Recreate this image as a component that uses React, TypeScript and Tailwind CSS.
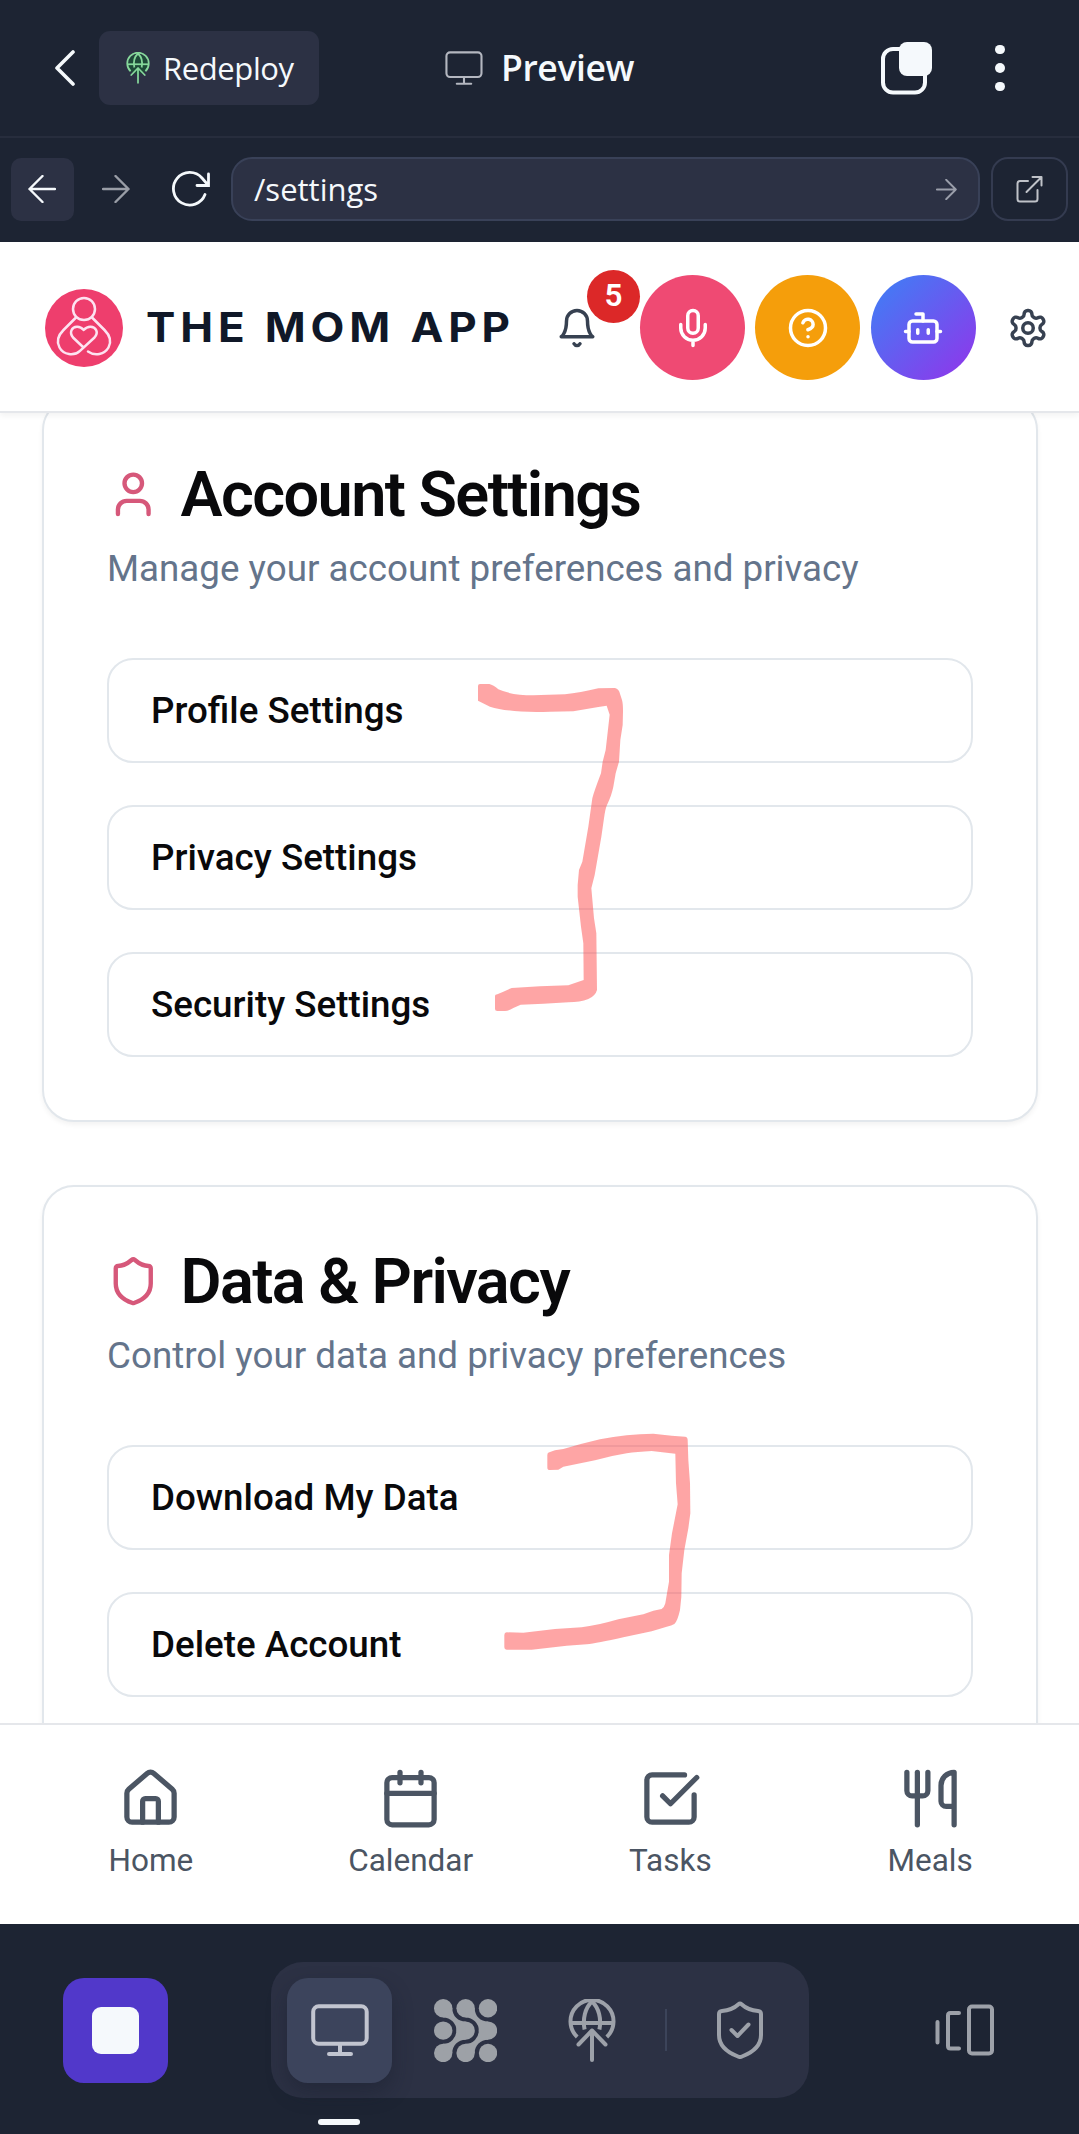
import React from "react";
import { Calendar, House, SquareCheckBig, User, Utensils } from "lucide-react";

const chromeFont = "font-['Open_Sans',sans-serif]";

function GlobeUp({ className, strokeWidth = 4, tint = "none" }: { className: string; strokeWidth?: number; tint?: string }) {
  return (
    <svg viewBox="0 0 48 63" className={className} fill="none" stroke="currentColor" strokeWidth={strokeWidth} strokeLinecap="round" strokeLinejoin="round">
      <circle cx="24" cy="24" r="20" fill={tint} stroke="none" />
      <g strokeLinecap="butt">
        <path d="M9.2 38A21.5 21.5 0 1 1 38.800 38" />
        <path d="M2.500 24h43" />
        <path d="M16.600 30.500C14.500 20 17 9 24 2.500C31 9 33.500 20 31.400 30.500" />
      </g>
      <path d="M10.500 45.500L24 31.500L37.500 45.500M24 31.500V61" />
    </svg>
  );
}

function Screen({ className, strokeWidth = 4 }: { className: string; strokeWidth?: number }) {
  return (
    <svg viewBox="0 0 58 52" className={className} fill="none" stroke="currentColor" strokeWidth={strokeWidth} strokeLinecap="round">
      <rect x="2.200" y="2.200" width="53.500" height="37.500" rx="5.500" />
      <path d="M29 40v9.500M18 50h22" />
    </svg>
  );
}

function Arrow({ className, flip = false }: { className: string; flip?: boolean }) {
  return (
    <svg viewBox="0 0 28 28" className={className} fill="none" stroke="currentColor" strokeWidth="2.400" strokeLinecap="round" strokeLinejoin="round">
      <path d={flip ? "M27 14H1.500M14.500 1L1.500 14L14.500 27" : "M1 14H26.500M13.500 1L26.500 14L13.500 27"} />
    </svg>
  );
}

function MomLogo() {
  return (
    <svg viewBox="0 0 78 78" className="size-[78px] shrink-0" fill="none" stroke="#fde3f1" strokeWidth="2.500" strokeLinecap="round" strokeLinejoin="round">
      <circle cx="39" cy="39" r="39" fill="#ee3e6d" stroke="none" />
      <circle cx="39" cy="20" r="11" />
      <path d="M31 28.500L18.500 41C12.500 47 11.500 53 14.500 58.500C18.500 66 29 67.500 35 61.800L49.500 48.500C54 43.500 51 38 45.500 37.800C42.500 37.700 41 38.500 38.700 41C36.500 38.500 34.500 37.700 32 37.800C26.500 38 24 43.500 28 48.500L38 58" />
      <path d="M47 28.500L59.500 41C65.500 47 66.500 53 63.500 58.500C59.500 65.500 50 67.500 43 62.500" />
    </svg>
  );
}

function Line({ children, className = "size-[42px]" }: { children: React.ReactNode; className?: string }) {
  return (
    <svg viewBox="0 0 24 24" className={className} fill="none" stroke="currentColor" strokeWidth="2" strokeLinecap="round" strokeLinejoin="round">
      {children}
    </svg>
  );
}

function Shield() {
  return (
    <Line className="size-[52.500px]">
      <path d="M20 13c0 5-3.500 7.500-7.660 8.950a1 1 0 0 1-.67-.01C7.500 20.500 4 18 4 13V6a1 1 0 0 1 1-1c2 0 4.500-1.200 6.240-2.720a1.170 1.170 0 0 1 1.520 0C14.510 3.810 17 5 19 5a1 1 0 0 1 1 1z" />
    </Line>
  );
}

function NodeGrid() {
  const c = [9.2, 31.6, 54];
  const link = (x: number) => (
    <g key={x}>
      <path d={`M${x + 9.1} 9.200C${x + 9.1} 17 ${x + 15} 22.500 ${x + 22.4} 22.500V31.600H${x + 13.2}A13.200 13.200 0 0 0 ${x} 18.400L${x} 9.200Z`} />
      <path d={`M${x + 9.1} 54C${x + 9.1} 46.200 ${x + 15} 40.700 ${x + 22.4} 40.700V31.600H${x + 13.2}A13.200 13.200 0 0 1 ${x} 44.800L${x} 54Z`} />
    </g>
  );
  return (
    <svg viewBox="0 0 63 63" className="size-[63px]" fill="#9da1a7">
      {c.map((x) => c.map((y) => <circle key={`${x}-${y}`} cx={x} cy={y} r="9.200" />))}
      {[9.2, 31.6].map(link)}
    </svg>
  );
}

function TopBar() {
  return (
    <div className={`flex h-[138px] shrink-0 items-center border-b-2 border-[#272d3d] text-[#f5f9fc] ${chromeFont}`}>
      <svg viewBox="0 0 20 36" className="ml-[55px] h-[36px] w-[20px]" fill="none" stroke="currentColor" strokeWidth="3.600" strokeLinecap="round" strokeLinejoin="round">
        <path d="M18 2L2 18L18 34" />
      </svg>
      <div className="ml-[24px] flex h-[74px] w-[220px] items-center rounded-[11px] bg-[#2c3144] pl-[27px]">
        <GlobeUp className="h-[32px] w-[24px] text-[#86d89b]" tint="#1d4a38" strokeWidth={3.5} />
        <span className="ml-[13px] text-[31px] tracking-[-0.400px]">Redeploy</span>
      </div>
      <Screen className="ml-[126px] h-[36px] w-[38px] text-[#b4b7c0]" strokeWidth={3.2} />
      <span className="ml-[18px] w-[136px] text-[35.500px] font-semibold tracking-[-0.400px]">Preview</span>
      <svg viewBox="0 0 52 54" className="ml-[244px] h-[54px] w-[52px]">
        <rect x="2" y="8" width="42" height="43.500" rx="10" fill="none" stroke="#f5f9fc" strokeWidth="4" />
        <rect x="18" y="1" width="33" height="34" rx="8" fill="#f5f9fc" />
      </svg>
      <div className="ml-[62px] flex flex-col gap-[9px]">
        <i className="size-[9.500px] rounded-full bg-[#f5f9fc]" />
        <i className="size-[9.500px] rounded-full bg-[#f5f9fc]" />
        <i className="size-[9.500px] rounded-full bg-[#f5f9fc]" />
      </div>
    </div>
  );
}

function AddressBar() {
  return (
    <div className={`flex h-[104px] shrink-0 items-center pb-[2px] pl-[11px] text-[#f5f9fc] ${chromeFont}`}>
      <div className="flex size-[63px] items-center justify-center rounded-[10px] bg-[#2c3144] pr-[2px]">
        <Arrow className="size-[28px]" flip />
      </div>
      <Arrow className="ml-[28px] size-[28px] text-[#999da6]" />
      <svg viewBox="0 0 38 36" className="ml-[42px] h-[36px] w-[38px]" fill="none" stroke="currentColor" strokeWidth="2.800" strokeLinecap="round">
        <path d="M33 23.500A16.300 16.300 0 1 1 30 7L36 14M36.500 3V14.500H25" />
      </svg>
      <div className="ml-[21px] flex h-[64px] w-[749px] items-center rounded-[21px] border-2 border-[#394158] bg-[#2c3144] pl-[21px]">
        <span className="text-[31px]">/settings</span>
        <Arrow className="mr-[21px] ml-auto size-[21px] text-[#9a9eaa]" />
      </div>
      <div className="ml-[11px] flex h-[64px] w-[77px] items-center justify-center rounded-[17px] border-2 border-[#343b50]">
        <svg viewBox="0 0 27 28" className="h-[28px] w-[27px]" fill="none" stroke="#bfc2c8" strokeWidth="2" strokeLinecap="round" strokeLinejoin="round">
          <path d="M12 6H4Q1.500 6 1.500 8.500V24Q1.500 26.500 4 26.500H19Q21.500 26.500 21.500 24V15M10.500 17L25.500 2M16.500 2H25.500V10.500" />
        </svg>
      </div>
    </div>
  );
}

function AppHeader() {
  const round = "flex size-[105px] shrink-0 items-center justify-center rounded-full text-white";
  return (
    <header className="relative z-10 flex h-[171px] shrink-0 items-center border-b-2 border-[#e5e7eb] bg-white pt-[2px] pl-[45px] shadow-[0_3px_6px_rgba(0,0,0,0.05)]">
      <MomLogo />
      <span className="mt-[2px] ml-[23px] w-[410px] shrink-0 origin-left scale-x-[1.085] font-[Inter,sans-serif] text-[40.500px] font-bold tracking-[4.500px] whitespace-nowrap text-[#101828]">
        THE MOM APP
      </span>
      <div className="relative text-[#374151]">
        <Line>
          <path d="M6 8a6 6 0 0 1 12 0c0 7 3 9 3 9H3s3-2 3-9" />
          <path d="M10.300 21a1.940 1.940 0 0 0 3.400 0" />
        </Line>
        <span className="absolute -top-[37px] left-[31px] flex size-[53px] items-center justify-center rounded-full bg-[#dc2828] text-[31.500px] font-semibold text-white">5</span>
      </div>
      <div className="ml-[42px] flex gap-[10px]">
        <div className={`${round} bg-[#ef4a73]`}>
          <Line>
            <path d="M12 2a3 3 0 0 0-3 3v7a3 3 0 0 0 6 0V5a3 3 0 0 0-3-3Z" />
            <path d="M19 10v2a7 7 0 0 1-14 0v-2M12 19v3" />
          </Line>
        </div>
        <div className={`${round} bg-[#f59e0b]`}>
          <Line>
            <circle cx="12" cy="12" r="10" />
            <path d="M9.090 9a3 3 0 0 1 5.830 1c0 2-3 3-3 3M12 17h.01" />
          </Line>
        </div>
        <div className={`${round} ml-[0.500px] bg-[linear-gradient(135deg,#3b82f6,#9333ea)]`}>
          <Line>
            <path d="M12 8V4H8" />
            <rect x="4" y="8" width="16" height="12" rx="2" />
            <path d="M2 14h2M20 14h2M15 13v2M9 13v2" />
          </Line>
        </div>
      </div>
      <div className="ml-[31px] text-[#374151]">
        <Line>
          <path d="M12.220 2h-.44a2 2 0 0 0-2 2v.18a2 2 0 0 1-1 1.730l-.43.25a2 2 0 0 1-2 0l-.15-.08a2 2 0 0 0-2.730.73l-.22.38a2 2 0 0 0 .73 2.730l.15.1a2 2 0 0 1 1 1.720v.51a2 2 0 0 1-1 1.740l-.15.09a2 2 0 0 0-.73 2.730l.22.38a2 2 0 0 0 2.730.73l.15-.08a2 2 0 0 1 2 0l.43.25a2 2 0 0 1 1 1.730V20a2 2 0 0 0 2 2h.44a2 2 0 0 0 2-2v-.18a2 2 0 0 1 1-1.730l.43-.25a2 2 0 0 1 2 0l.15.08a2 2 0 0 0 2.730-.73l.22-.39a2 2 0 0 0-.73-2.730l-.15-.08a2 2 0 0 1-1-1.740v-.5a2 2 0 0 1 1-1.740l.15-.09a2 2 0 0 0 .73-2.730l-.22-.38a2 2 0 0 0-2.730-.73l-.15.08a2 2 0 0 1-2 0l-.43-.25a2 2 0 0 1-1-1.730V4a2 2 0 0 0-2-2z" />
          <circle cx="12" cy="12" r="3" />
        </Line>
      </div>
    </header>
  );
}

function Card({ icon, title, subtitle, items }: { icon: React.ReactNode; title: string; subtitle: string; items: string[] }) {
  return (
    <section className="h-[724px] shrink-0 rounded-[32px] border-2 border-[#e2e7ec] bg-white px-[63px] pt-[63px] shadow-[0_3px_5px_rgba(0,0,0,0.05)]">
      <h2 className="flex h-[63px] items-center gap-[21px] text-[63px] leading-none font-semibold tracking-[-1.575px] whitespace-nowrap text-[#09090b]">
        <span className="text-[#d6587a]">{icon}</span>
        {title}
      </h2>
      <p className="mt-[16.500px] text-[36.750px] leading-[52.500px] whitespace-nowrap text-[#64748b]">{subtitle}</p>
      <div className="mt-[63px] flex flex-col gap-[42px]">
        {items.map((t) => (
          <div key={t} className="flex h-[105px] items-center rounded-[26px] border-2 border-[#e2e7ec] px-[42px] text-[36.750px] font-medium text-[#09090b]">
            {t}
          </div>
        ))}
      </div>
    </section>
  );
}

function Markup() {
  return (
    <>
      <svg viewBox="0 0 780 1200" className="pointer-events-none absolute top-[227px] left-[440px] h-[400px] w-[260px]" fill="#fe4b4b" fillOpacity="0.500">
        <path d="M114 138Q114 132 120 132L148 132Q160 135 175 148Q215 166 280 166L375 163Q420 158 475 145L523 144Q532 144 538 155L546 180Q549 190 549 215L548 255L541 300L537 365L527 400L520 440Q515 465 501 495Q496 505 492 535L484 590L464 705L454 745L462 835L469 880L471 1050Q466 1068 445 1077Q420 1087 385 1087L310 1091L242 1094L220 1104Q205 1113 195 1113L172 1113Q165 1113 165 1107L165 1068Q165 1063 172 1063L190 1055L215 1044L300 1039L385 1036L431 1020L430 910L423 860L413 770L413 735L417 690L427 665L445 560L457 475Q462 455 483 400L488 365L497 330L509 224L500 197L475 201L400 214L330 215Q210 219 150 200L114 182Z" />
      </svg>
      <svg viewBox="0 0 780 840" className="pointer-events-none absolute top-[987px] left-[480px] h-[280px] w-[260px]" fill="#fe4b4b" fillOpacity="0.500">
        <path d="M202 165Q202 158 208 157L225 151L250 147Q300 132 360 118Q440 102 520 101L575 107L615 110Q623 111 623 120L625 180L630 250L631 340L625 385L613 450L605 520L604 590L600 630Q592 665 583 672Q575 677 560 680L515 694L430 712Q350 730 320 733L260 737L155 749L80 749Q73 749 73 742L73 705Q73 698 80 697L130 698L225 687L305 682Q350 677 415 658L490 643L520 632L545 627Q553 622 556 610L561 580L567 545L567 465L576 400L593 313L588 250L586 161L515 153Q470 155 440 160Q390 168 345 181L250 200L235 209L210 210Q202 210 202 203Z" />
      </svg>
    </>
  );
}

function BottomNav() {
  const tabs = [
    { label: "Home", Icon: House },
    { label: "Calendar", Icon: Calendar },
    { label: "Tasks", Icon: SquareCheckBig },
    { label: "Meals", Icon: Utensils },
  ];
  return (
    <nav className="grid h-[201px] shrink-0 grid-cols-4 border-t-2 border-[#e5e7eb] bg-white pt-[42px] pr-[19px] pl-[21px] text-[#4b5563]">
      {tabs.map(({ label, Icon }) => (
        <div key={label} className="flex flex-col items-center gap-[10px]">
          <Icon className="size-[63px]" strokeWidth={2} />
          <span className="text-[31.500px] leading-[42px]">{label}</span>
        </div>
      ))}
    </nav>
  );
}

function Dock() {
  const cell = "relative flex size-[105px] items-center justify-center rounded-[21px]";
  return (
    <div className="relative flex h-[210px] shrink-0 items-center pl-[63px] text-[#9da1a9]">
      <div className="mt-[2px] flex size-[105px] items-center justify-center rounded-[21px] bg-[#5138ca]">
        <div className="size-[47px] rounded-[9px] bg-[#f5f9fc]" />
      </div>
      <div className="mt-[2px] ml-[103px] flex h-[136px] items-center gap-[21px] rounded-[32px] bg-[#2c3144] px-[16px]">
        <div className={`${cell} bg-[#3c445c] text-[#c2c5d0] shadow-[0_10px_20px_rgba(20,25,40,0.35)]`}>
          <Screen className="h-[52px] w-[58px]" />
          <span className="absolute top-[141px] left-[31px] h-[6px] w-[42px] rounded-full bg-[#f5f9fc]" />
        </div>
        <div className={cell}>
          <NodeGrid />
        </div>
        <div className={cell}>
          <GlobeUp className="h-[63px] w-[48px]" />
        </div>
        <div className="h-[42px] w-[2px] bg-[#3c445a]" />
        <div className={`${cell} pr-[1px]`}>
          <svg viewBox="0 0 48 58" className="h-[58px] w-[48px]" fill="none" stroke="currentColor" strokeWidth="4" strokeLinecap="round" strokeLinejoin="round">
            <path d="M22.500 3.200Q24 1.800 25.500 3.200Q32 9.200 42 10Q45 10.200 45 13V34C45 45 36.500 51.500 26 55.500Q24 56.500 22 55.500C11.500 51.500 3 45 3 34V13Q3 10.200 6 10Q16 9.200 22.500 3.200Z" />
            <path d="M15.500 29L21.500 35L32.500 23.500" />
          </svg>
        </div>
      </div>
      <svg viewBox="0 0 60 52" className="mt-[2px] ml-[126px] h-[52px] w-[60px]" fill="none" stroke="currentColor" strokeWidth="4" strokeLinecap="round" strokeLinejoin="round">
        <path d="M2.500 18V38.500M24 9H15.500Q13 9 13 11.500V42Q13 44.500 15.500 44.500H24" />
        <rect x="34" y="2.500" width="23" height="47" rx="3" />
      </svg>
    </div>
  );
}

export default function App() {
  return (
    <div className="flex h-[2134px] w-[1079px] flex-col overflow-hidden bg-[#1d2433] font-[Roboto,sans-serif]">
      <TopBar />
      <AddressBar />
      <AppHeader />
      <main className="relative h-[1310px] shrink-0 overflow-hidden bg-white">
        <div className="-mt-[15px] flex flex-col gap-[63px] pr-[41px] pl-[42px]">
          <Card
            icon={<User className="size-[52.500px]" strokeWidth={2} />}
            title="Account Settings"
            subtitle="Manage your account preferences and privacy"
            items={["Profile Settings", "Privacy Settings", "Security Settings"]}
          />
          <Card
            icon={<Shield />}
            title="Data & Privacy"
            subtitle="Control your data and privacy preferences"
            items={["Download My Data", "Delete Account"]}
          />
        </div>
        <Markup />
      </main>
      <BottomNav />
      <Dock />
    </div>
  );
}
